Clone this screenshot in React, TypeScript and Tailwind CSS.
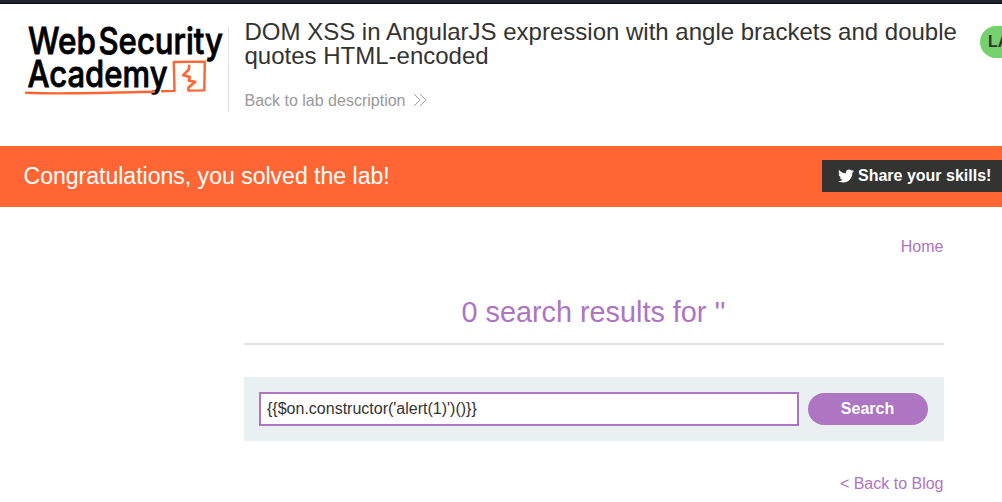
import { FaTwitter } from "react-icons/fa";

function AcademyLogo() {
  return (
    <svg
      className="block shrink-0 overflow-visible"
      width="204"
      height="86"
      viewBox="24 25 204 86"
      role="img"
      aria-label="Web Security Academy"
    >
      <g
        fill="#000"
        stroke="#000"
        strokeWidth="0.8"
        fontFamily="Inter, 'Liberation Sans', sans-serif"
        fontSize="36.5"
        fontWeight="500"
      >
        <text x="28" y="54.3" textLength="68" lengthAdjust="spacingAndGlyphs">Web</text>
        <text x="98.5" y="54.3" textLength="124.5" lengthAdjust="spacingAndGlyphs">Security</text>
        <text x="27.5" y="87" textLength="140" lengthAdjust="spacingAndGlyphs">Academy</text>
      </g>
      <g fill="none" stroke="#ff6633" strokeLinejoin="round" strokeLinecap="round">
        <path
          d="M26 92.7 C40 93.3 55 93.6 70 93.3 C100 93 130 92.3 154 91.7 M162 91.2 L174.5 90.9 L173.8 62 L204.8 61.6 L204.3 90.4 L188.5 90.6"
          strokeWidth="2.4"
        />
        <path d="M189.2 65.7 L188.8 69.5 L183.2 75.2 L190 77 L188.8 80.7 L195.3 81.7 L188.5 87.5 L188.5 90" strokeWidth="2.6" />
      </g>
    </svg>
  );
}

function LabHeader() {
  return (
    <header className="flex h-[142px] items-start pl-6">
      <div className="mt-[21px] flex shrink-0">
        <AcademyLogo />
      </div>
      <div className="mt-[22px] h-[86px] w-px shrink-0 bg-[#e0e0e0]" />
      <div className="ml-[15.5px] mt-[16px] w-[735.5px] shrink-0">
        <h2 className="w-[720px] text-2xl leading-6 text-[#333332]">
          DOM XSS in AngularJS expression with angle brackets and double quotes HTML-encoded
        </h2>
        <a className="mt-[21px] flex items-center text-base leading-6 text-[#999999]">
          Back to lab description
          <svg className="mb-[2px] ml-[8px]" width="14" height="14" viewBox="0 0 14 14" fill="none" stroke="#999999">
            <path d="M1.3 1.2 L7 7 L1.3 12.8 M7.1 1.2 L12.8 7 L7.1 12.8" />
          </svg>
        </a>
      </div>
      <div className="mt-[22px] h-8 w-[88px] shrink-0 rounded-2xl bg-[#75d16e] pl-2 text-base font-bold leading-8 text-[#333332]">
        LAB
      </div>
    </header>
  );
}

export default function App() {
  return (
    <div className="h-[502px] w-full overflow-hidden bg-white font-['Liberation_Sans',Arial,sans-serif]">
      <div className="h-1 border-b border-[#080812] bg-[#20202f]" />
      <LabHeader />
      <section className="flex h-[61px] items-center justify-between bg-[#ff6633] pl-[23.5px]">
        <p className="mb-[2px] text-[23.04px] leading-7 text-white">Congratulations, you solved the lab!</p>
        <button className="mb-px flex h-8 w-[180px] items-center gap-1 bg-[#333332] pl-4 text-base font-bold leading-8 text-white">
          <FaTwitter size={16} />
          <span>Share your skills!</span>
        </button>
      </section>
      <main className="ml-[243.5px] w-[700px] text-[#ad75c2]">
        <nav className="pt-[28px] text-right text-base leading-6">
          <a>Home</a>
        </nav>
        <h1 className="mt-[27px] h-[59px] border-b-2 border-[#e4e4e4] pt-[8px] text-center text-[28.8px] leading-[36px]">
          0 search results for ''
        </h1>
        <form className="mt-8 flex h-16 items-center bg-[#eaf0f2] pl-[15px]">
          <input
            className="h-[34px] w-[540px] border-2 border-[#ad75c2] bg-white px-[6.5px] text-base text-[#333332] outline-none"
            defaultValue="{{$on.constructor('alert(1)')()}}"
          />
          <button type="button" className="ml-[9px] h-8 w-[120px] rounded-full bg-[#ad75c2] text-base font-bold leading-8 text-white">
            Search
          </button>
        </form>
        <div className="mt-[31px] text-right text-base leading-6">
          <a>&lt; Back to Blog</a>
        </div>
      </main>
    </div>
  );
}
